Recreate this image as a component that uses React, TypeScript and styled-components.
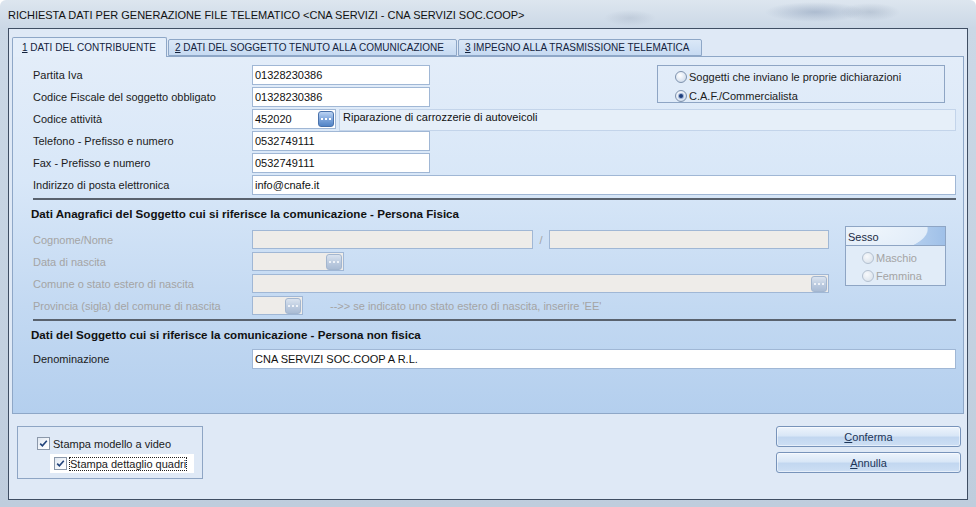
import React from 'react';
import styled, { createGlobalStyle } from 'styled-components';

const GlobalStyle = createGlobalStyle`
  html, body { margin: 0; padding: 0; }
  body {
    font-family: "Liberation Sans", Arial, sans-serif;
    font-size: 11px;
    color: #1b1b1b;
    background: #ffffff;
  }
`;

const Window = styled.div`
  width: 976px;
  height: 507px;
  box-sizing: border-box;
  display: flex;
  flex-direction: column;
  overflow: hidden;
  border-radius: 6px 6px 0 0;
  background:
    radial-gradient(ellipse 50px 10px at 815px 12px, rgba(80, 105, 145, 0.3), transparent),
    radial-gradient(ellipse 30px 9px at 870px 12px, rgba(90, 110, 140, 0.22), transparent),
    radial-gradient(ellipse 26px 8px at 630px 18px, rgba(120, 135, 160, 0.2), transparent),
    linear-gradient(180deg, #dde6ef 0%, #cbd8e6 28px, #bfcddd 100%);
`;

const TitleBar = styled.div`
  height: 28px;
  flex: none;
  display: flex;
  align-items: center;
  padding: 2px 0 0 8px;
  box-sizing: border-box;
  font-size: 11px;
  color: #111;
  white-space: nowrap;
`;

const Frame = styled.div`
  flex: 1;
  display: flex;
  padding: 0 8px 7px 8px;
  min-height: 0;
`;

const Client = styled.div`
  flex: 1;
  display: flex;
  flex-direction: column;
  border: 1px solid #3f4e63;
  background: #dfe9f6;
  padding: 8px 3px 0 3px;
`;

const TabStrip = styled.div`
  display: flex;
  height: 19px;
  align-items: flex-end;
  position: relative;
  z-index: 1;
`;

const Tab = styled.div<{ $active?: boolean; $w: number }>`
  width: ${p => p.$w}px;
  box-sizing: border-box;
  height: ${p => (p.$active ? 20 : 17)}px;
  margin-bottom: ${p => (p.$active ? -1 : 0)}px;
  margin-right: 1px;
  padding-left: ${p => (p.$active ? 9 : 6)}px;
  display: flex;
  align-items: center;
  font-size: 10px;
  color: #14233d;
  white-space: pre;
  border: 1px solid #8ea7c7;
  border-bottom: ${p => (p.$active ? 'none' : '1px solid #8ea7c7')};
  border-radius: 2px 2px 0 0;
  background: ${p =>
    p.$active ? '#e4eefa' : 'linear-gradient(180deg, #dbe8f7 0%, #c6daf2 100%)'};
`;

const Caption = styled.span`
  white-space: pre;
`;

const Mnemonic = styled.span`
  text-decoration: underline;
`;

const Panel = styled.div`
  height: 358px;
  box-sizing: border-box;
  border: 1px solid #8ea7c7;
  padding: 8px 7px 0 20px;
  background: linear-gradient(180deg, #e3edf9 0%, #d8e7f8 35%, #c3d9f2 70%, #b4cfee 100%);
  display: flex;
  flex-direction: column;
`;

const TopBlock = styled.div`
  display: flex;
  align-items: flex-start;
`;

const RowsColumn = styled.div`
  display: flex;
  flex-direction: column;
  flex: 1;
`;

const FieldRow = styled.div<{ $h?: number; $mt?: number }>`
  display: flex;
  align-items: center;
  height: ${p => p.$h ?? 20}px;
  margin-top: ${p => p.$mt ?? 2}px;
`;

const Label = styled.div<{ $disabled?: boolean }>`
  width: 219px;
  flex: none;
  white-space: nowrap;
  color: ${p => (p.$disabled ? '#a4a4a4' : '#1b1b1b')};
`;

const TextBox = styled.div<{ $w?: number; $disabled?: boolean }>`
  ${p => (p.$w ? `width: ${p.$w}px; flex: none;` : 'flex: 1;')}
  height: 100%;
  box-sizing: border-box;
  display: flex;
  align-items: center;
  justify-content: space-between;
  padding: 0 1px 0 2px;
  border: 1px solid #a0b7d5;
  background: ${p => (p.$disabled ? '#eeece9' : '#ffffff')};
  color: #111;
  white-space: nowrap;
  overflow: hidden;
`;

const Description = styled.div`
  flex: 1;
  height: 22px;
  align-self: flex-start;
  box-sizing: border-box;
  margin-left: 3px;
  padding: 1px 0 0 3px;
  border: 1px solid #c3d4ea;
  background: #e6eff9;
  color: #111;
  white-space: nowrap;
`;

const EllipsisButton = styled.div<{ $disabled?: boolean }>`
  width: 16px;
  height: 16px;
  box-sizing: border-box;
  flex: none;
  border-radius: 3px;
  display: flex;
  align-items: center;
  justify-content: center;
  border: 1px solid ${p => (p.$disabled ? '#a3b6cf' : '#4a72ab')};
  background: ${p =>
    p.$disabled
      ? 'linear-gradient(180deg, #dae3ef 0%, #bccbdf 55%, #aabcd5 100%)'
      : 'linear-gradient(180deg, #bcd4f3 0%, #80a7dc 50%, #5284c6 100%)'};
`;

const Hint = styled.div`
  margin-left: 27px;
  color: #a4a4a4;
  white-space: nowrap;
`;

const Slash = styled.div`
  width: 16px;
  flex: none;
  text-align: center;
  color: #a4a4a4;
`;

const RadioBox = styled.div`
  margin-left: auto;
  margin-right: 11px;
  width: 288px;
  height: 38px;
  box-sizing: border-box;
  border: 1px solid #8ea5c4;
  padding: 4px 0 0 17px;
  display: flex;
  flex-direction: column;
  gap: 6px;
`;

const RadioRow = styled.div<{ $disabled?: boolean }>`
  display: flex;
  align-items: center;
  height: 13px;
  gap: 2px;
  white-space: nowrap;
  color: ${p => (p.$disabled ? '#a4a4a4' : '#1b1b1b')};
`;

const RadioDot = styled.span<{ $checked?: boolean; $disabled?: boolean }>`
  width: 12px;
  height: 12px;
  box-sizing: border-box;
  border-radius: 50%;
  flex: none;
  position: relative;
  border: 1px solid ${p => (p.$disabled ? '#b3c0d0' : '#7f93ae')};
  background: ${p =>
    p.$disabled
      ? 'radial-gradient(circle at 40% 35%, #f7f9fc 0%, #dfe6ee 70%, #cfd8e3 100%)'
      : 'radial-gradient(circle at 40% 35%, #ffffff 0%, #d9e3f0 65%, #b3c5dc 100%)'};

  &::after {
    content: '';
    display: ${p => (p.$checked ? 'block' : 'none')};
    position: absolute;
    left: 3px;
    top: 3px;
    width: 4px;
    height: 4px;
    border-radius: 50%;
    background: #1c3c7a;
    box-shadow: 0 0 0 1px rgba(60, 100, 170, 0.45);
  }
`;

const Separator = styled.div<{ $mt: number }>`
  height: 2px;
  flex: none;
  margin-top: ${p => p.$mt}px;
  background: #59626e;
`;

const SectionTitle = styled.div<{ $h: number }>`
  height: ${p => p.$h}px;
  display: flex;
  align-items: center;
  margin-left: -2px;
  font-size: 11.6px;
  font-weight: bold;
  color: #111;
  white-space: nowrap;
`;

const PersonBlock = styled.div`
  display: flex;
  align-items: flex-start;
`;

const SexBox = styled.div`
  width: 101px;
  height: 60px;
  box-sizing: border-box;
  margin: -1px 10px 0 16px;
  border: 1px solid #8ea5c4;
  background: #e1ecf8;
  display: flex;
  flex-direction: column;
`;

const SexHeader = styled.div`
  height: 19px;
  box-sizing: border-box;
  padding: 2px 0 0 2px;
  display: flex;
  align-items: center;
  color: #1a2a44;
  border-bottom: 1px solid #8ea5c4;
  background:
    radial-gradient(ellipse 62px 26px at 24px 2px, #eef5fc 0%, #e2edf9 92%, transparent 94%),
    linear-gradient(90deg, #dce9f8 0%, #b9d2ef 60%, #9fc0e8 100%);
`;

const SexBody = styled.div`
  display: flex;
  flex-direction: column;
  gap: 5px;
  padding: 5px 0 0 16px;
`;

const Bottom = styled.div`
  display: flex;
  justify-content: space-between;
  align-items: flex-start;
  padding: 12px 3px 0 5px;
`;

const CheckGroup = styled.div`
  width: 186px;
  height: 53px;
  box-sizing: border-box;
  border: 1px solid #8ea5c4;
  padding-top: 10px;
  display: flex;
  flex-direction: column;
  gap: 4px;
`;

const CheckRow = styled.div<{ $focused?: boolean; $indent: number }>`
  display: flex;
  align-items: center;
  gap: 2px;
  margin-left: ${p => p.$indent}px;
  height: ${p => (p.$focused ? 19 : 13)}px;
  width: ${p => (p.$focused ? '144px' : 'auto')};
  padding-left: ${p => (p.$focused ? 4 : 0)}px;
  box-sizing: border-box;
  background: ${p => (p.$focused ? '#ffffff' : 'transparent')};
  white-space: nowrap;
`;

const CheckBoxSquare = styled.span`
  width: 13px;
  height: 13px;
  box-sizing: border-box;
  flex: none;
  display: flex;
  align-items: center;
  justify-content: center;
  border: 1px solid #8b98aa;
  background: linear-gradient(135deg, #dfe7f1 0%, #f7f9fc 60%, #ffffff 100%);
`;

const CheckLabel = styled.span<{ $focused?: boolean }>`
  padding: 1px 1px;
  outline: ${p => (p.$focused ? '1px dotted #222' : 'none')};
  outline-offset: -1px;
`;

const ButtonColumn = styled.div`
  display: flex;
  flex-direction: column;
  gap: 5px;
`;

const DialogButton = styled.div`
  width: 185px;
  height: 21px;
  box-sizing: border-box;
  border: 1px solid #7793ba;
  border-radius: 3px;
  display: flex;
  align-items: center;
  justify-content: center;
  color: #1c3558;
  background: linear-gradient(180deg, #edf4fc 0%, #d9e7f7 45%, #c2d7f0 55%, #cddff4 100%);
  box-shadow: inset 0 0 0 1px rgba(255, 255, 255, 0.5);
`;

const Dots: React.FC<{ disabled?: boolean }> = ({ disabled }) => (
  <svg width="10" height="4" viewBox="0 0 10 4">
    {[0, 4, 8].map(x => (
      <rect key={x} x={x} y={1} width={2} height={2} fill={disabled ? '#eef2f8' : '#ffffff'} />
    ))}
  </svg>
);

const Ellipsis: React.FC<{ disabled?: boolean }> = ({ disabled }) => (
  <EllipsisButton $disabled={disabled}>
    <Dots disabled={disabled} />
  </EllipsisButton>
);

const Check: React.FC = () => (
  <CheckBoxSquare>
    <svg width="9" height="9" viewBox="0 0 9 9">
      <path d="M1.2 4.6 L3.4 6.8 L7.8 1.8" fill="none" stroke="#21427a" strokeWidth="1.6" />
    </svg>
  </CheckBoxSquare>
);

const tabs = [
  { key: '1', text: ' DATI DEL CONTRIBUENTE', w: 155, active: true },
  { key: '2', text: ' DATI DEL SOGGETTO TENUTO ALLA COMUNICAZIONE', w: 289 },
  { key: '3', text: ' IMPEGNO ALLA TRASMISSIONE TELEMATICA', w: 244 },
];

const App: React.FC = () => {
  return (
    <>
      <GlobalStyle />
      <Window>
        <TitleBar>RICHIESTA DATI PER GENERAZIONE FILE TELEMATICO &lt;CNA SERVIZI - CNA SERVIZI SOC.COOP&gt;</TitleBar>
        <Frame>
          <Client>
            <TabStrip>
              {tabs.map(t => (
                <Tab key={t.key} $w={t.w} $active={t.active}>
                  <Caption>
                    <Mnemonic>{t.key}</Mnemonic>
                    {t.text}
                  </Caption>
                </Tab>
              ))}
            </TabStrip>

            <Panel>
              <TopBlock>
                <RowsColumn>
                  <FieldRow $mt={0}>
                    <Label>Partita Iva</Label>
                    <TextBox $w={178}>01328230386</TextBox>
                  </FieldRow>
                  <FieldRow>
                    <Label>Codice Fiscale del soggetto obbligato</Label>
                    <TextBox $w={178}>01328230386</TextBox>
                  </FieldRow>
                </RowsColumn>
                <RadioBox>
                  <RadioRow>
                    <RadioDot />
                    Soggetti che inviano le proprie dichiarazioni
                  </RadioRow>
                  <RadioRow>
                    <RadioDot $checked />
                    C.A.F./Commercialista
                  </RadioRow>
                </RadioBox>
              </TopBlock>
              <FieldRow>
                <Label>Codice attività</Label>
                <TextBox $w={84}>
                  452020
                  <Ellipsis />
                </TextBox>
                <Description>Riparazione di carrozzerie di autoveicoli</Description>
              </FieldRow>
              <FieldRow>
                <Label>Telefono - Prefisso e numero</Label>
                <TextBox $w={178}>0532749111</TextBox>
              </FieldRow>
              <FieldRow>
                <Label>Fax - Prefisso e numero</Label>
                <TextBox $w={178}>0532749111</TextBox>
              </FieldRow>
              <FieldRow>
                <Label>Indirizzo di posta elettronica</Label>
                <TextBox>info@cnafe.it</TextBox>
              </FieldRow>

              <Separator $mt={3} />
              <SectionTitle $h={27}>
                Dati Anagrafici del Soggetto cui si riferisce la comunicazione - Persona Fisica
              </SectionTitle>
              <PersonBlock>
                <RowsColumn>
                  <FieldRow $h={19} $mt={3}>
                    <Label $disabled>Cognome/Nome</Label>
                    <TextBox $w={281} $disabled />
                    <Slash>/</Slash>
                    <TextBox $w={280} $disabled />
                  </FieldRow>
                  <FieldRow $h={19} $mt={3}>
                    <Label $disabled>Data di nascita</Label>
                    <TextBox $w={92} $disabled>
                      <span />
                      <Ellipsis disabled />
                    </TextBox>
                  </FieldRow>
                  <FieldRow $h={19} $mt={3}>
                    <Label $disabled>Comune o stato estero di nascita</Label>
                    <TextBox $w={577} $disabled>
                      <span />
                      <Ellipsis disabled />
                    </TextBox>
                  </FieldRow>
                  <FieldRow $h={19} $mt={3}>
                    <Label $disabled>Provincia (sigla) del comune di nascita</Label>
                    <TextBox $w={51} $disabled>
                      <span />
                      <Ellipsis disabled />
                    </TextBox>
                    <Hint>--&gt;&gt; se indicato uno stato estero di nascita, inserire 'EE'</Hint>
                  </FieldRow>
                </RowsColumn>
                <SexBox>
                  <SexHeader>Sesso</SexHeader>
                  <SexBody>
                    <RadioRow $disabled>
                      <RadioDot $disabled />
                      Maschio
                    </RadioRow>
                    <RadioRow $disabled>
                      <RadioDot $disabled />
                      Femmina
                    </RadioRow>
                  </SexBody>
                </SexBox>
              </PersonBlock>

              <Separator $mt={4} />
              <SectionTitle $h={26}>
                Dati del Soggetto cui si riferisce la comunicazione - Persona non fisica
              </SectionTitle>
              <FieldRow $mt={2}>
                <Label>Denominazione</Label>
                <TextBox>CNA SERVIZI SOC.COOP A R.L.</TextBox>
              </FieldRow>
            </Panel>

            <Bottom>
              <CheckGroup>
                <CheckRow $indent={19}>
                  <Check />
                  <CheckLabel>Stampa modello a video</CheckLabel>
                </CheckRow>
                <CheckRow $indent={32} $focused>
                  <Check />
                  <CheckLabel $focused>Stampa dettaglio quadri</CheckLabel>
                </CheckRow>
              </CheckGroup>
              <ButtonColumn>
                <DialogButton>
                  <Caption>
                    <Mnemonic>C</Mnemonic>onferma
                  </Caption>
                </DialogButton>
                <DialogButton>
                  <Caption>
                    <Mnemonic>A</Mnemonic>nnulla
                  </Caption>
                </DialogButton>
              </ButtonColumn>
            </Bottom>
          </Client>
        </Frame>
      </Window>
    </>
  );
};

export default App;
